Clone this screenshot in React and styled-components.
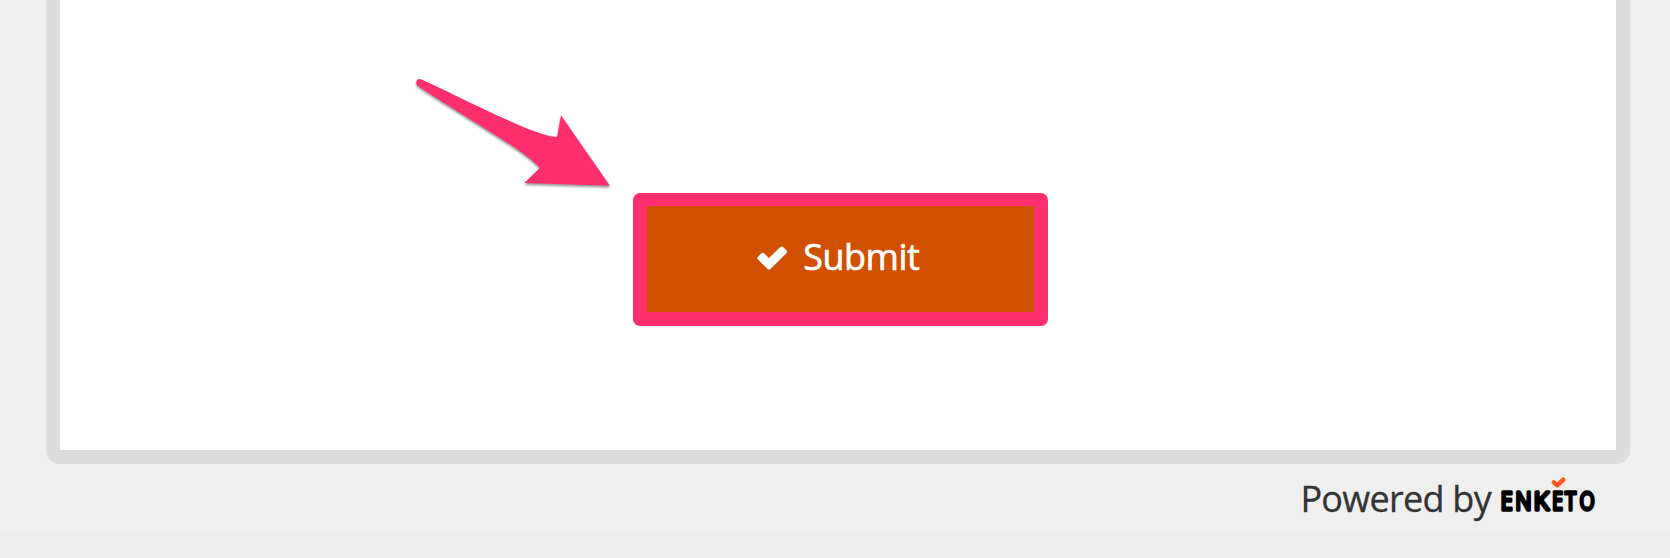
import React from "react";
import styled, { createGlobalStyle } from "styled-components";

const GlobalStyle = createGlobalStyle`
  *, *::before, *::after { box-sizing: border-box; }
  html, body { margin: 0; background: #eee; }
  body { overflow: hidden; font-family: "Open Sans", "Noto Sans", sans-serif; }
`;

const Page = styled.div`
  position: relative;
  display: flex;
  flex-direction: column;
  height: 558px;
  padding: 0 40px 0 46px;
  background: linear-gradient(#efefef 531px, #ededed 531px);
`;

const FormCard = styled.main`
  display: flex;
  justify-content: center;
  align-items: flex-start;
  height: 464px;
  padding-top: 192.5px;
  padding-left: 4.5px;
  background: #fff;
  border: 14px solid #dcdcdc;
  border-top: 0;
  border-radius: 0 0 14px 14px;
`;

const Highlight = styled.div`
  width: 414.5px;
  height: 133px;
  padding: 13.5px 14px 14px;
  background: #ff2f6d;
  border-radius: 7px;
`;

const SubmitButton = styled.button`
  display: flex;
  align-items: center;
  justify-content: center;
  gap: 15px;
  width: 100%;
  height: 100%;
  padding: 0 4px 2px 0;
  border: 0;
  background: #d05000;
  color: #fff;
  font: 400 36px/48px "Open Sans", "Noto Sans", sans-serif;
  letter-spacing: -0.5px;
  -webkit-text-stroke: 0.6px #fff;
`;

const Label = styled.span`
  margin-top: -2px;
`;

const CheckIcon = styled.svg`
  width: 31px;
  height: 24px;
  fill: currentColor;
`;

const Footer = styled.footer`
  display: flex;
  justify-content: flex-end;
  gap: 9px;
  padding: 11px 32px 0 0;
  color: #333;
  font-size: 36px;
  line-height: 48px;
  letter-spacing: -0.72px;
`;

const PoweredBy = styled.span`
  -webkit-text-stroke: 0.3px #333;
`;

const Logo = styled.svg`
  width: 98px;
  height: 48px;
  overflow: visible;
  font-family: "Open Sans", "Noto Sans", sans-serif;
  font-weight: 400;
  letter-spacing: 0;
`;

const Arrow = styled.svg`
  position: absolute;
  left: 400px;
  top: 60px;
  width: 230px;
  height: 140px;
  filter: drop-shadow(0 2px 1px rgba(0, 0, 0, 0.4));
`;

const letters = [
  { char: "E", x: 0.6, width: 12.2 },
  { char: "N", x: 15.3, width: 16.4 },
  { char: "K", x: 33.6, width: 15.6 },
  { char: "E", x: 52.1, width: 11 },
  { char: "T", x: 65.1, width: 11.1 },
  { char: "O", x: 79.4, width: 15.2 },
];

export default function App() {
  return (
    <>
      <GlobalStyle />
      <Page>
        <FormCard>
          <Highlight>
            <SubmitButton type="button">
              <CheckIcon viewBox="0 0 31 24" aria-hidden="true">
                <path d="M1 10.8 4.3 7.5Q5.8 6.2 7.3 7.5L12 12.1 23.2 1Q24.7-.2 26.1 1L29.5 4.3Q30.8 5.7 29.5 7.2L13.5 23Q12 24.2 10.6 23L1 13.6Q-.4 12.2 1 10.8Z" />
              </CheckIcon>
              <Label>Submit</Label>
            </SubmitButton>
          </Highlight>
        </FormCard>
        <Footer>
          <PoweredBy>Powered by</PoweredBy>
          <Logo viewBox="0 0 98 48" aria-label="Enketo">
            {letters.map(({ char, x, width }, i) => (
              <text key={i} x={x} y="35.4" fontSize="26" textLength={width} lengthAdjust="spacingAndGlyphs" stroke="#000" fill="#000" strokeWidth="3.3" strokeLinejoin="round">
                {char}
              </text>
            ))}
            <path d="M53.9 7.4 57.3 10.3 63.3 4.7" fill="none" stroke="#ff5a1f" strokeWidth="4.6" strokeLinecap="round" strokeLinejoin="round" />
          </Logo>
        </Footer>
        <Arrow viewBox="0 0 230 140" aria-hidden="true">
          <path fill="#ff2f6d" d="M21 19.2C16 18 14.5 24 18.5 26.2C60 54.5 127 91.5 139.7 108L124.3 123 210 125.8 161 55.3 157 77C135 76 75 44 21 19.2Z" />
        </Arrow>
      </Page>
    </>
  );
}
